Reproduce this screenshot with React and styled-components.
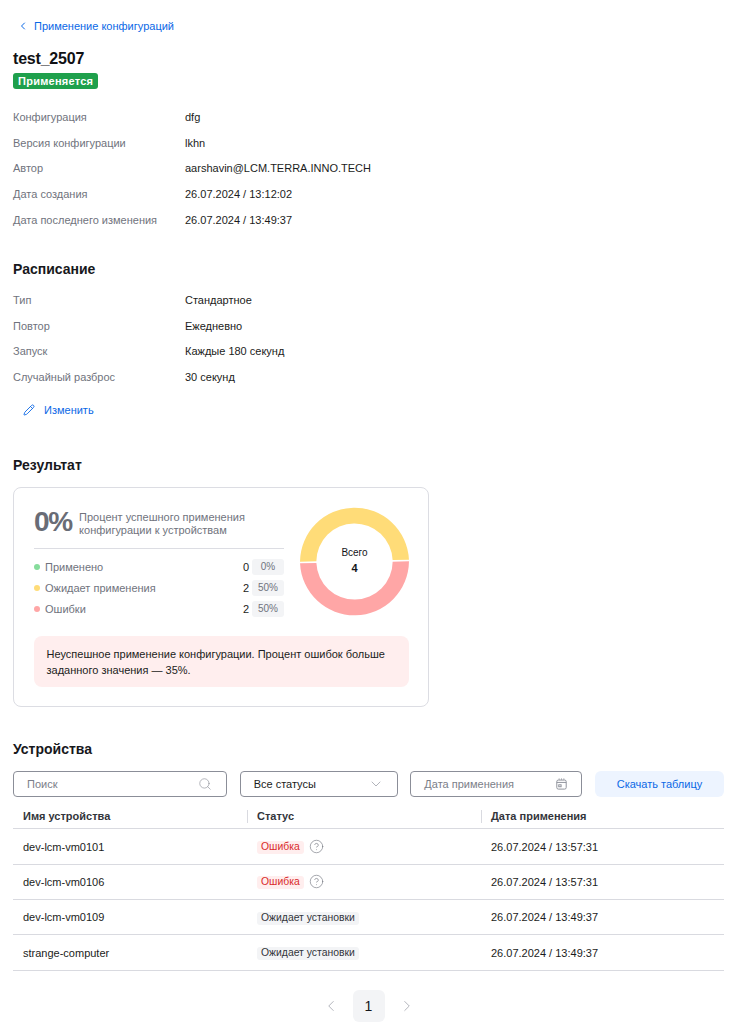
import styled, { createGlobalStyle } from 'styled-components';
import { ChevronLeft, ChevronRight, ChevronDown, Pencil, Search, CircleHelp } from 'lucide-react';

const GlobalStyle = createGlobalStyle`
  html, body {
    margin: 0;
    background: #fff;
  }
  body {
    font-family: "Liberation Sans", Arial, sans-serif;
    font-size: 11px;
    color: #14151a;
  }
  * {
    box-sizing: border-box;
  }
`;

const configRows = [
  ['Конфигурация', 'dfg'],
  ['Версия конфигурации', 'lkhn'],
  ['Автор', 'aarshavin@LCM.TERRA.INNO.TECH'],
  ['Дата создания', '26.07.2024 / 13:12:02'],
  ['Дата последнего изменения', '26.07.2024 / 13:49:37'],
];

const scheduleRows = [
  ['Тип', 'Стандартное'],
  ['Повтор', 'Ежедневно'],
  ['Запуск', 'Каждые 180 секунд'],
  ['Случайный разброс', '30 секунд'],
];

const legend = [
  { label: 'Применено', color: '#86dc9c', count: 0, pct: '0%' },
  { label: 'Ожидает применения', color: '#ffdc78', count: 2, pct: '50%' },
  { label: 'Ошибки', color: '#ffa6a6', count: 2, pct: '50%' },
];

const devices = [
  { name: 'dev-lcm-vm0101', status: 'Ошибка', error: true, date: '26.07.2024 / 13:57:31' },
  { name: 'dev-lcm-vm0106', status: 'Ошибка', error: true, date: '26.07.2024 / 13:57:31' },
  { name: 'dev-lcm-vm0109', status: 'Ожидает установки', date: '26.07.2024 / 13:49:37' },
  { name: 'strange-computer', status: 'Ожидает установки', date: '26.07.2024 / 13:49:37' },
];

const CalendarIcon = () => (
  <svg width="11" height="12" viewBox="0 0 14 15" fill="none" stroke="#8b8e98" strokeWidth="1.2">
    <rect x="1" y="2.5" width="12" height="11.5" rx="2" />
    <path d="M1 5.5H13" />
    <path d="M4 0.5V2M7 0.5V2M10 0.5V2" />
    <rect x="3.5" y="8.5" width="3" height="2.5" />
  </svg>
);

function App() {
  return (
    <Page>
      <GlobalStyle />
      <BackLink>
        <ChevronLeft size={12} strokeWidth={2} />
        Применение конфигураций
      </BackLink>
      <Title>test_2507</Title>
      <Badge>Применяется</Badge>

      <InfoList $top={15}>
        {configRows.map(([label, value]) => (
          <InfoRow key={label} $height={25.75}>
            <InfoLabel>{label}</InfoLabel>
            <span>{value}</span>
          </InfoRow>
        ))}
      </InfoList>

      <SectionTitle $top={26}>Расписание</SectionTitle>
      <InfoList $top={9}>
        {scheduleRows.map(([label, value]) => (
          <InfoRow key={label} $height={25.4}>
            <InfoLabel>{label}</InfoLabel>
            <span>{value}</span>
          </InfoRow>
        ))}
      </InfoList>
      <EditLink>
        <Pencil size={12} strokeWidth={1.8} />
        Изменить
      </EditLink>

      <SectionTitle $top={35}>Результат</SectionTitle>
      <ResultCard>
        <ResultTop>
          <ResultSummary>
            <Headline>
              <Percent>0%</Percent>
              <HeadlineText>
                Процент успешного применения
                <br />
                конфигурации к устройствам
              </HeadlineText>
            </Headline>
            <Legend>
              {legend.map((item) => (
                <LegendRow key={item.label}>
                  <Dot $color={item.color} />
                  <LegendLabel>{item.label}</LegendLabel>
                  <LegendCount>{item.count}</LegendCount>
                  <LegendPct>{item.pct}</LegendPct>
                </LegendRow>
              ))}
            </Legend>
          </ResultSummary>
          <Donut>
            <svg width="109" height="109" viewBox="0 0 110 110">
              <g transform="rotate(-1 55 55)">
                <path d="M0.02 54.2 A55 55 0 0 1 109.98 54.2 L93.49 54.2 A38.5 38.5 0 0 0 16.51 54.2 Z" fill="#ffdc78" />
                <path d="M0.02 55.8 L16.51 55.8 A38.5 38.5 0 0 0 93.49 55.8 L109.98 55.8 A55 55 0 0 1 0.02 55.8 Z" fill="#ffa6a6" />
              </g>
            </svg>
            <DonutCenter>
              <DonutCaption>Всего</DonutCaption>
              <DonutTotal>4</DonutTotal>
            </DonutCenter>
          </Donut>
        </ResultTop>
        <ErrorNote>
          Неуспешное применение конфигурации. Процент ошибок больше заданного значения — 35%.
        </ErrorNote>
      </ResultCard>

      <SectionTitle $top={32}>Устройства</SectionTitle>
      <Toolbar>
        <Field $width={214} $end={14}>
          <Placeholder>Поиск</Placeholder>
          <Search size={14} strokeWidth={1.1} color="#8b8e98" />
        </Field>
        <Field $width={158} $end={13}>
          <FieldValue>Все статусы</FieldValue>
          <ChevronDown size={16} strokeWidth={1} color="#8b8e98" />
        </Field>
        <Field $width={172} $end={14}>
          <Placeholder>Дата применения</Placeholder>
          <CalendarIcon />
        </Field>
        <DownloadButton>Скачать таблицу</DownloadButton>
      </Toolbar>

      <TableHead>
        <HeadCell>Имя устройства</HeadCell>
        <HeadCell $divider>Статус</HeadCell>
        <HeadCell $divider>Дата применения</HeadCell>
      </TableHead>
      {devices.map((device) => (
        <TableRow key={device.name}>
          <Cell>{device.name}</Cell>
          <StatusCell>
            <StatusTag $error={device.error}>{device.status}</StatusTag>
            {device.error && <CircleHelp size={15} strokeWidth={1} color="#70737d" />}
          </StatusCell>
          <Cell $date>{device.date}</Cell>
        </TableRow>
      ))}

      <Pagination>
        <PageArrow>
          <ChevronLeft size={18} strokeWidth={1} />
        </PageArrow>
        <PageNumber>1</PageNumber>
        <PageArrow>
          <ChevronRight size={18} strokeWidth={1} />
        </PageArrow>
      </Pagination>
    </Page>
  );
}

const Page = styled.div`
  width: 739px;
  height: 1026px;
  padding: 18px 15px 0 13px;
  overflow: hidden;
`;

const BackLink = styled.div`
  display: flex;
  align-items: center;
  gap: 5px;
  height: 16px;
  padding-left: 4px;
  color: #0b68e6;
`;

const Title = styled.div`
  margin-top: 14px;
  height: 22px;
  line-height: 22px;
  font-size: 16px;
  font-weight: 700;
  letter-spacing: -0.2px;
  color: #101114;
`;

const Badge = styled.div`
  display: inline-flex;
  align-items: center;
  height: 16px;
  margin-top: 3px;
  padding: 0 5px;
  border-radius: 3px;
  background: #1fa04c;
  color: #fff;
  font-weight: 700;
  letter-spacing: 0.25px;
`;

const InfoList = styled.div`
  margin-top: ${(p) => p.$top}px;
`;

const InfoRow = styled.div`
  display: grid;
  grid-template-columns: 172px 1fr;
  align-items: center;
  height: ${(p) => p.$height}px;
  color: #1b1c21;
`;

const InfoLabel = styled.span`
  color: #70737d;
`;

const SectionTitle = styled.div`
  margin-top: ${(p) => p.$top}px;
  height: 20px;
  line-height: 20px;
  font-size: 14px;
  font-weight: 700;
  color: #17181c;
`;

const EditLink = styled.div`
  display: flex;
  align-items: center;
  gap: 9px;
  height: 20px;
  margin-top: 11px;
  padding-left: 10px;
  color: #0b68e6;
`;

const ResultCard = styled.div`
  width: 416px;
  height: 220px;
  margin-top: 12px;
  padding: 19px 19px 0 20px;
  border: 1px solid #dcdde3;
  border-radius: 8px;
`;

const ResultTop = styled.div`
  display: flex;
  justify-content: space-between;
  height: 110px;
`;

const ResultSummary = styled.div`
  width: 250px;
`;

const Headline = styled.div`
  display: flex;
  align-items: center;
  gap: 7px;
  height: 42px;
  border-bottom: 1px solid #dcdde3;
  padding-bottom: 8px;
`;

const Percent = styled.div`
  margin-top: -3px;
  font-size: 28px;
  font-weight: 700;
  letter-spacing: -1.2px;
  color: #696c76;
`;

const HeadlineText = styled.div`
  line-height: 13px;
  color: #70737d;
`;

const Legend = styled.div`
  display: flex;
  flex-direction: column;
  gap: 5px;
  margin-top: 10px;
`;

const LegendRow = styled.div`
  display: flex;
  align-items: center;
  height: 16px;
`;

const Dot = styled.span`
  width: 6px;
  height: 6px;
  margin-right: 5px;
  border-radius: 50%;
  background: ${(p) => p.$color};
`;

const LegendLabel = styled.span`
  flex: 1;
  color: #70737d;
`;

const LegendCount = styled.span`
  margin-right: 3px;
  color: #1b1c21;
`;

const LegendPct = styled.span`
  width: 32px;
  height: 16px;
  line-height: 15px;
  border-radius: 3px;
  background: #f3f4f6;
  color: #70737d;
  font-size: 10px;
  text-align: center;
`;

const Donut = styled.div`
  position: relative;
  width: 109px;
  height: 109px;
`;

const DonutCenter = styled.div`
  position: absolute;
  inset: 0;
  display: flex;
  flex-direction: column;
  align-items: center;
  justify-content: center;
  padding-bottom: 3px;
`;

const DonutCaption = styled.div`
  font-size: 10px;
  line-height: 12px;
`;

const DonutTotal = styled.div`
  margin-top: 3px;
  font-size: 11px;
  line-height: 12px;
  font-weight: 700;
`;

const ErrorNote = styled.div`
  margin-top: 19px;
  padding: 10px 12.5px;
  height: 51px;
  border-radius: 8px;
  background: #ffeeee;
  line-height: 16px;
  color: #1b1c21;
`;

const Toolbar = styled.div`
  display: flex;
  justify-content: space-between;
  margin-top: 12px;
`;

const Field = styled.div`
  display: flex;
  align-items: center;
  justify-content: space-between;
  width: ${(p) => p.$width}px;
  height: 26px;
  padding: 0 ${(p) => p.$end}px 0 13px;
  border: 1px solid #8b8e98;
  border-radius: 4px;
`;

const Placeholder = styled.span`
  color: #7b7e88;
`;

const FieldValue = styled.span`
  color: #1b1c21;
`;

const DownloadButton = styled.div`
  display: flex;
  align-items: center;
  justify-content: center;
  width: 129px;
  height: 26px;
  border-radius: 6px;
  background: #edf4ff;
  color: #0b68e6;
`;

const columns = `234px 234px 1fr`;

const TableHead = styled.div`
  display: grid;
  grid-template-columns: ${columns};
  align-items: center;
  height: 32px;
  padding-top: 7px;
  border-bottom: 1px solid #d9dae0;
`;

const HeadCell = styled.div`
  height: 13px;
  line-height: 13px;
  padding-left: ${(p) => (p.$divider ? 9 : 10)}px;
  border-left: ${(p) => (p.$divider ? '1px solid #d9dae0' : 'none')};
  font-weight: 700;
  color: #33353b;
`;

const TableRow = styled.div`
  display: grid;
  grid-template-columns: ${columns};
  align-items: center;
  height: 35.4px;
  border-bottom: 1px solid #d9dae0;
`;

const Cell = styled.div`
  padding-left: 10px;
  color: #1b1c21;
`;

const StatusCell = styled.div`
  display: flex;
  align-items: center;
  gap: 5px;
  padding-left: 10px;
`;

const StatusTag = styled.span`
  height: 13px;
  margin-top: 2px;
  line-height: 12px;
  padding: 0 4px;
  border-radius: 3px;
  font-size: 10.4px;
  background: ${(p) => (p.$error ? '#ffeeee' : '#f3f4f6')};
  color: ${(p) => (p.$error ? '#d92b2b' : '#33353b')};
`;

const Pagination = styled.div`
  display: flex;
  justify-content: center;
  align-items: center;
  gap: 6px;
  margin-top: 19px;
`;

const PageArrow = styled.div`
  display: flex;
  align-items: center;
  justify-content: center;
  width: 32px;
  height: 32px;
  color: #9a9ca5;
`;

const PageNumber = styled.div`
  width: 32px;
  height: 32px;
  line-height: 32px;
  border-radius: 6px;
  background: #f3f4f6;
  font-size: 14px;
  text-align: center;
`;

export default App;
